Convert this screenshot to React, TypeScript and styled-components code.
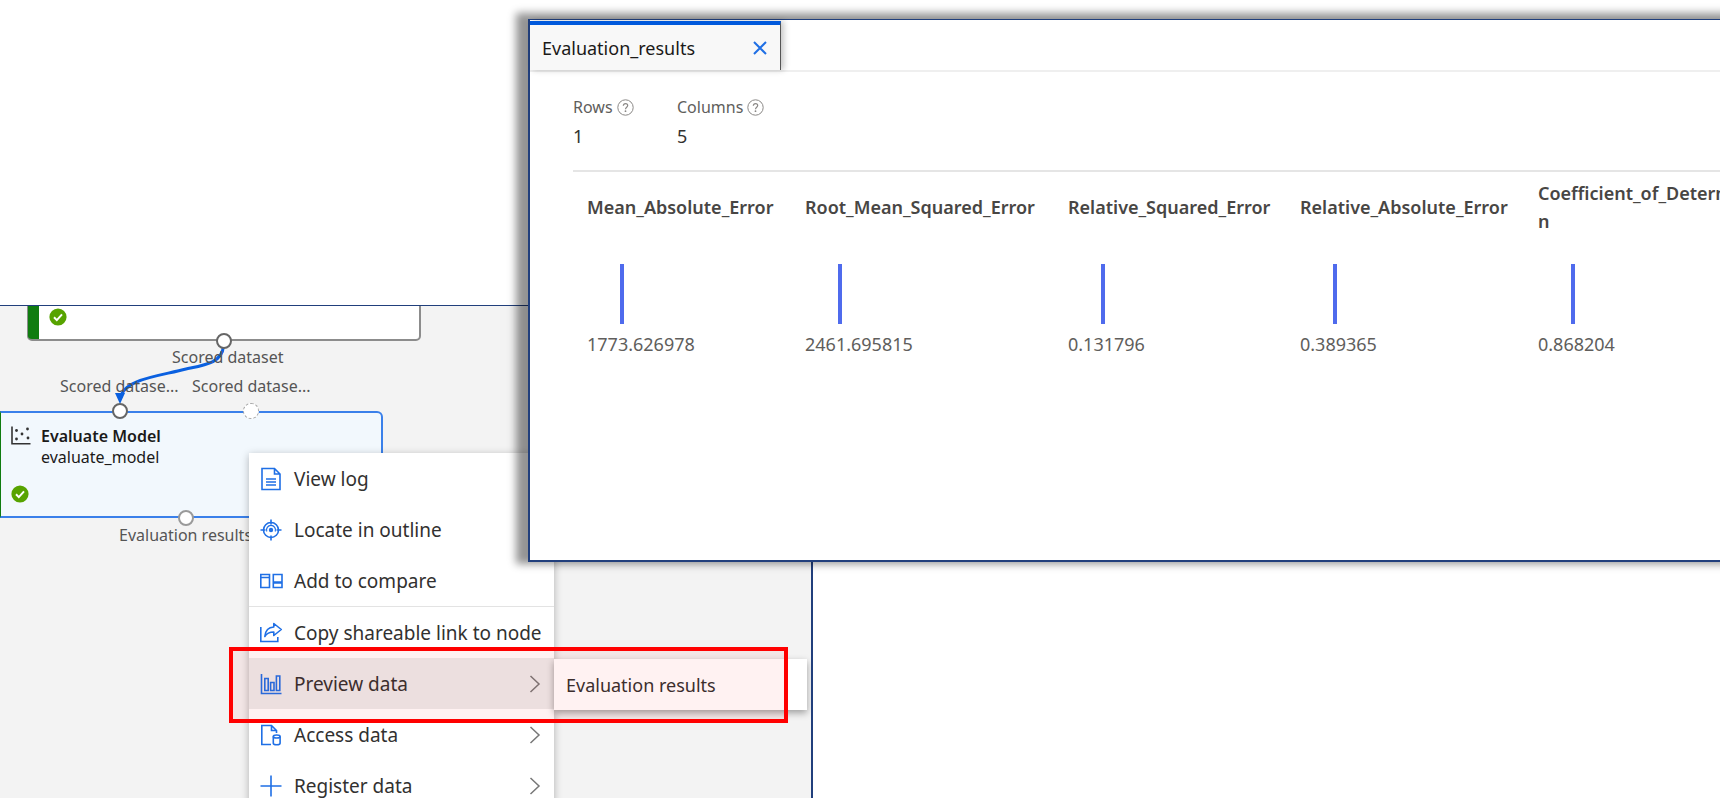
import React from 'react';
import styled, { createGlobalStyle, css } from 'styled-components';

const GlobalStyle = createGlobalStyle`
  *, *::before, *::after { box-sizing: border-box; }
  body {
    margin: 0;
    background: #fff;
    color: #323130;
    font-family: 'Noto Sans', 'Segoe UI', sans-serif;
    font-size: 16px;
  }
  button { font: inherit; color: inherit; border: 0; background: none; padding: 0; cursor: pointer; }
`;

const BLUE = '#1f6fe5';
const NAVY = '#213f7c';

const Page = styled.main`
  position: relative;
  height: 100vh;
  overflow: hidden;
`;

/* ---------- pipeline graph ---------- */

const GraphCanvas = styled.section`
  position: absolute;
  top: 305px;
  bottom: 0;
  left: 0;
  width: 813px;
  overflow: hidden;
  background: #f3f3f3;
  border-top: 1px solid ${NAVY};
  border-right: 2px solid ${NAVY};
`;

const ScoreNode = styled.div`
  position: absolute;
  top: -40px;
  left: 27px;
  width: 394px;
  height: 75px;
  display: flex;
  align-items: flex-end;
  padding: 0 0 13px 21px;
  background: linear-gradient(to right, #107c10 11px, #fff 11px);
  border: 2px solid #8c8c8c;
  border-left-width: 1px;
  border-radius: 5px;
`;

const EvaluateNode = styled.div`
  position: absolute;
  top: 105px;
  left: 0;
  width: 383px;
  height: 107px;
  display: grid;
  grid-template-columns: 20px 1fr;
  grid-template-rows: 1fr auto;
  column-gap: 10px;
  padding: 13px 10px 13px 10px;
  background: #f2f8fd;
  border: 2px solid #3a80ea;
  border-left-color: #107c10;
  border-left-width: 1px;
  border-top-right-radius: 6px;
`;

const NodeText = styled.div`
  color: #1b1a19;
  line-height: 21px;
`;

const NodeTitle = styled.div`
  font-weight: 600;
`;

const Port = styled.span<{ $x: number; $y: number; $kind?: 'dashed' | 'pale' }>`
  position: absolute;
  left: ${(p) => p.$x - 8}px;
  top: ${(p) => p.$y - 8}px;
  width: 16px;
  height: 16px;
  border-radius: 50%;
  background: #fff;
  border: 2px ${(p) => (p.$kind === 'dashed' ? 'dashed #a6a6a6' : p.$kind === 'pale' ? 'solid #9a9a9a' : 'solid #666')};
  ${(p) => p.$kind === 'dashed' && css`border-width: 1px;`}
`;

const PortLabel = styled.span<{ $x: number; $y: number }>`
  position: absolute;
  left: ${(p) => p.$x}px;
  top: ${(p) => p.$y}px;
  line-height: 20px;
  color: #555;
  white-space: nowrap;
`;

const Edge = styled.svg`
  position: absolute;
  top: 0;
  left: 0;
`;

/* ---------- context menu ---------- */

const Menu = styled.div`
  position: absolute;
  top: 147px;
  left: 249px;
  width: 305px;
  background: #fff;
  box-shadow: 0 2px 8px rgba(0, 0, 0, 0.28);
`;

const MenuItem = styled.button<{ $active?: boolean }>`
  display: flex;
  align-items: center;
  gap: 11px;
  width: 100%;
  height: 51px;
  padding: 0 12px 0 10px;
  font-size: 19px;
  line-height: 26px;
  text-align: left;
  white-space: nowrap;
  background: ${(p) => (p.$active ? '#ebebeb' : 'transparent')};
`;

const ItemText = styled.span`
  flex: 1;
`;

const MenuRule = styled.hr`
  height: 1px;
  margin: 0;
  border: 0;
  background: #e3e3e3;
`;

const Submenu = styled.div`
  position: absolute;
  top: 353px;
  left: 554px;
  width: 253px;
  background: #fff;
  box-shadow: 0 3px 7px rgba(0, 0, 0, 0.35);
`;

const SubmenuItem = styled.button`
  width: 100%;
  height: 51px;
  padding: 0 12px;
  font-size: 18px;
  text-align: left;
`;

const Highlight = styled.div`
  position: absolute;
  top: 341px;
  left: 229px;
  width: 559px;
  height: 76px;
  background: rgba(255, 0, 0, 0.05);
  border: 4px solid #f00;
  pointer-events: none;
`;

/* ---------- results window ---------- */

/* The window runs past the right side of the page, so its shadow has no end there. */
const ResultsWindow = styled.section`
  position: absolute;
  top: 19px;
  left: 528px;
  right: -40px;
  padding: 1px 0 202px;
  background: #fff;
  border: 2px solid ${NAVY};
  border-top-width: 1px;
  box-shadow: -8px -2px 8px 4px rgba(0, 0, 0, 0.42);
`;

const TabStrip = styled.div`
  display: flex;
  height: 51px;
  border-bottom: 2px solid #efefef;
`;

const Tab = styled.div`
  display: flex;
  align-items: center;
  justify-content: space-between;
  width: 251px;
  padding: 0 12px;
  font-size: 18px;
  line-height: 24px;
  color: #1b1a19;
  background: #f8f8f8;
  border-top: 4px solid #0059dc;
  border-right: 1px solid #555;
  box-shadow: 3px 0 6px rgba(0, 0, 0, 0.22);
`;

const CloseButton = styled.button`
  display: flex;
`;

const Body = styled.div`
  padding-left: 43px;
  overflow: hidden;
`;

const Stats = styled.dl`
  display: flex;
  margin: 0;
  padding: 23px 0 22px;
`;

const Stat = styled.div`
  display: flex;
  flex-direction: column;
  gap: 5px;
  min-width: 104px;
`;

const StatLabel = styled.dt`
  display: flex;
  align-items: center;
  gap: 4px;
  line-height: 24px;
  color: #605e5c;
`;

const StatValue = styled.dd`
  margin: 0;
  font-size: 18px;
  line-height: 24px;
`;

const ResultsTable = styled.table`
  width: 1275px;
  table-layout: fixed;
  border-collapse: separate;
  border-spacing: 0;
  border-top: 2px solid #e5e5e5;
  font-size: 18px;
  line-height: 28px;
`;

const HeadCell = styled.th<{ $width: number }>`
  width: ${(p) => p.$width}px;
  padding: 7px 14px 0;
  font-weight: 600;
  text-align: left;
  vertical-align: middle;
  white-space: pre;
  color: #484644;
`;

const ValueCell = styled.td`
  padding: 29px 14px 0;
  color: #605e5c;
`;

const Bar = styled.div`
  width: 4px;
  height: 60px;
  margin: 0 0 6px 33px;
  background: #4f6bed;
`;

/* ---------- icons ---------- */

const CheckBadge = () => (
  <svg width="18" height="18" viewBox="0 0 18 18" aria-hidden="true">
    <circle cx="9" cy="9" r="8.6" fill="#57a300" />
    <path d="M5 9.3l2.8 2.8 5.2-5.7" fill="none" stroke="#fff" strokeWidth="2" />
  </svg>
);

const ScatterIcon = () => (
  <svg width="20" height="20" viewBox="0 0 20 20" aria-hidden="true">
    <path d="M1 0.5v17.3h18.5" fill="none" stroke="#333" strokeWidth="1.6" />
    <g fill="#333">
      <circle cx="5.5" cy="4.5" r="1.4" /><circle cx="16.5" cy="3" r="1.4" /><circle cx="11" cy="8" r="1.4" />
      <circle cx="5.5" cy="13" r="1.4" /><circle cx="17" cy="12" r="1.4" />
    </g>
  </svg>
);

const Glyph = ({ children }: { children: React.ReactNode }) => (
  <svg width="24" height="24" viewBox="0 0 24 24" fill="none" stroke={BLUE} strokeWidth="1.6" aria-hidden="true">
    {children}
  </svg>
);

const LogIcon = () => (
  <Glyph>
    <path d="M3 1.5h12.500l5.500 5.500v15.500H3zM15.500 1.500v5.500H21M7 12h10M7 15h10M7 18h10" />
  </Glyph>
);

const LocateIcon = () => (
  <Glyph>
    <circle cx="12" cy="12" r="7.5" />
    <circle cx="12" cy="12" r="2.2" fill={BLUE} stroke="none" />
    <path d="M12 1.500v5M12 17.500v5M1.500 12h5M17.500 12h5" />
    <path d="M7.800 13.500a4.500 4.500 0 1 1 8.400 0" strokeWidth="1.200" />
  </Glyph>
);

const CompareIcon = () => (
  <Glyph>
    <path d="M1.800 5.500h8.700v13H1.800zM1.800 8.500h8.700M14.300 5.500h8.700v13h-8.700z" />
    <path d="M14.300 13.500h8.700" strokeWidth="2.500" />
  </Glyph>
);

const ShareIcon = () => (
  <Glyph>
    <path d="M1.800 6v14.500h17V16" />
    <path d="M14.800 2.500l7.500 6-7.500 6V11c-4 0-7 1.200-9 4.500.5-5 3-9.300 9-9.500z" strokeLinejoin="round" />
  </Glyph>
);

const ChartIcon = () => (
  <Glyph>
    <path d="M2.500 2v19.500h20" />
    <path d="M5.800 6.500h3.400v12H5.800zM11.600 10.500H15v8h-3.400zM17.400 4h3.400v14.500h-3.400z" />
  </Glyph>
);

const AccessIcon = () => (
  <Glyph>
    <path d="M12 21.500H2.800v-19h9.700l5 5V10M12.500 2.500v5h5" />
    <ellipse cx="17.700" cy="13.500" rx="3.400" ry="1.500" />
    <path d="M14.300 13.500v6.700c0 .9 1.500 1.500 3.400 1.500s3.400-.6 3.400-1.500v-6.700" />
  </Glyph>
);

const PlusIcon = () => (
  <Glyph>
    <path d="M12 1.500v21M1.500 12h21" />
  </Glyph>
);

const Chevron = () => (
  <svg width="14" height="20" viewBox="0 0 14 20" fill="none" stroke="#777" strokeWidth="1.500" aria-hidden="true">
    <path d="M2.500 2l8.500 8-8.500 8" />
  </svg>
);

const HelpIcon = () => (
  <svg width="17" height="17" viewBox="0 0 17 17" fill="none" stroke="#8a8886" aria-hidden="true">
    <circle cx="8.500" cy="8.500" r="7.700" />
    <path d="M6.300 6.800c0-1.300.9-2.200 2.200-2.200s2.200.9 2.200 2c0 1.600-2.200 1.700-2.200 3.600" strokeWidth="1.200" />
    <circle cx="8.500" cy="12.200" r=".9" fill="#8a8886" stroke="none" />
  </svg>
);

const CloseIcon = () => (
  <svg width="16" height="16" viewBox="0 0 16 16" fill="none" stroke={BLUE} strokeWidth="2" aria-hidden="true">
    <path d="M2 2l12 12M14 2L2 14" />
  </svg>
);

/* ---------- data ---------- */

const firstItems = [
  { label: 'View log', Icon: LogIcon },
  { label: 'Locate in outline', Icon: LocateIcon },
  { label: 'Add to compare', Icon: CompareIcon },
];

const secondItems = [
  { label: 'Copy shareable link to node', Icon: ShareIcon },
  { label: 'Preview data', Icon: ChartIcon, more: true, active: true },
  { label: 'Access data', Icon: AccessIcon, more: true },
  { label: 'Register data', Icon: PlusIcon, more: true },
];

const stats = [
  { label: 'Rows', value: 1 },
  { label: 'Columns', value: 5 },
];

const metrics = [
  { name: 'Mean_Absolute_Error', value: '1773.626978', width: 218 },
  { name: 'Root_Mean_Squared_Error', value: '2461.695815', width: 263 },
  { name: 'Relative_Squared_Error', value: '0.131796', width: 232 },
  { name: 'Relative_Absolute_Error', value: '0.389365', width: 238 },
  { name: 'Coefficient_of_Determinatio\nn', value: '0.868204', width: 324 },
];

export default function App() {
  return (
    <Page>
      <GlobalStyle />
      <GraphCanvas aria-label="Pipeline graph">
        <ScoreNode>
          <CheckBadge />
        </ScoreNode>
        <EvaluateNode>
          <ScatterIcon />
          <NodeText>
            <NodeTitle>Evaluate Model</NodeTitle>
            <div>evaluate_model</div>
          </NodeText>
          <CheckBadge />
        </EvaluateNode>
        <Edge width="400" height="120" viewBox="0 0 400 120" aria-hidden="true">
          <path
            d="M223.500 40C222 57 205 59 186 63C160 70 123 73 120.500 92"
            fill="none"
            stroke="#0a60e0"
            strokeWidth="3"
          />
          <path d="M115 87h10l-5 11z" fill="#0a60e0" />
        </Edge>
        <PortLabel $x={172} $y={41}>Scored dataset</PortLabel>
        <PortLabel $x={60} $y={70}>Scored datase...</PortLabel>
        <PortLabel $x={192} $y={70}>Scored datase...</PortLabel>
        <PortLabel $x={119} $y={219}>Evaluation results</PortLabel>
        <Port $x={224} $y={35} />
        <Port $x={120} $y={105} />
        <Port $x={251} $y={105} $kind="dashed" />
        <Port $x={186} $y={212} $kind="pale" />

        <Menu role="menu">
          {firstItems.map(({ label, Icon }) => (
            <MenuItem key={label} role="menuitem">
              <Icon />
              <ItemText>{label}</ItemText>
            </MenuItem>
          ))}
          <MenuRule />
          {secondItems.map(({ label, Icon, more, active }) => (
            <MenuItem key={label} role="menuitem" $active={active}>
              <Icon />
              <ItemText>{label}</ItemText>
              {more && <Chevron />}
            </MenuItem>
          ))}
        </Menu>
        <Submenu role="menu">
          <SubmenuItem role="menuitem">Evaluation results</SubmenuItem>
        </Submenu>
        <Highlight />
      </GraphCanvas>

      <ResultsWindow>
        <TabStrip>
          <Tab>
            Evaluation_results
            <CloseButton aria-label="Close tab">
              <CloseIcon />
            </CloseButton>
          </Tab>
        </TabStrip>
        <Body>
          <Stats>
            {stats.map((s) => (
              <Stat key={s.label}>
                <StatLabel>
                  {s.label}
                  <HelpIcon />
                </StatLabel>
                <StatValue>{s.value}</StatValue>
              </Stat>
            ))}
          </Stats>
          <ResultsTable>
            <thead>
              <tr>
                {metrics.map((m) => (
                  <HeadCell key={m.name} scope="col" $width={m.width}>{m.name}</HeadCell>
                ))}
              </tr>
            </thead>
            <tbody>
              <tr>
                {metrics.map((m) => (
                  <ValueCell key={m.name}>
                    <Bar />
                    {m.value}
                  </ValueCell>
                ))}
              </tr>
            </tbody>
          </ResultsTable>
        </Body>
      </ResultsWindow>
    </Page>
  );
}
